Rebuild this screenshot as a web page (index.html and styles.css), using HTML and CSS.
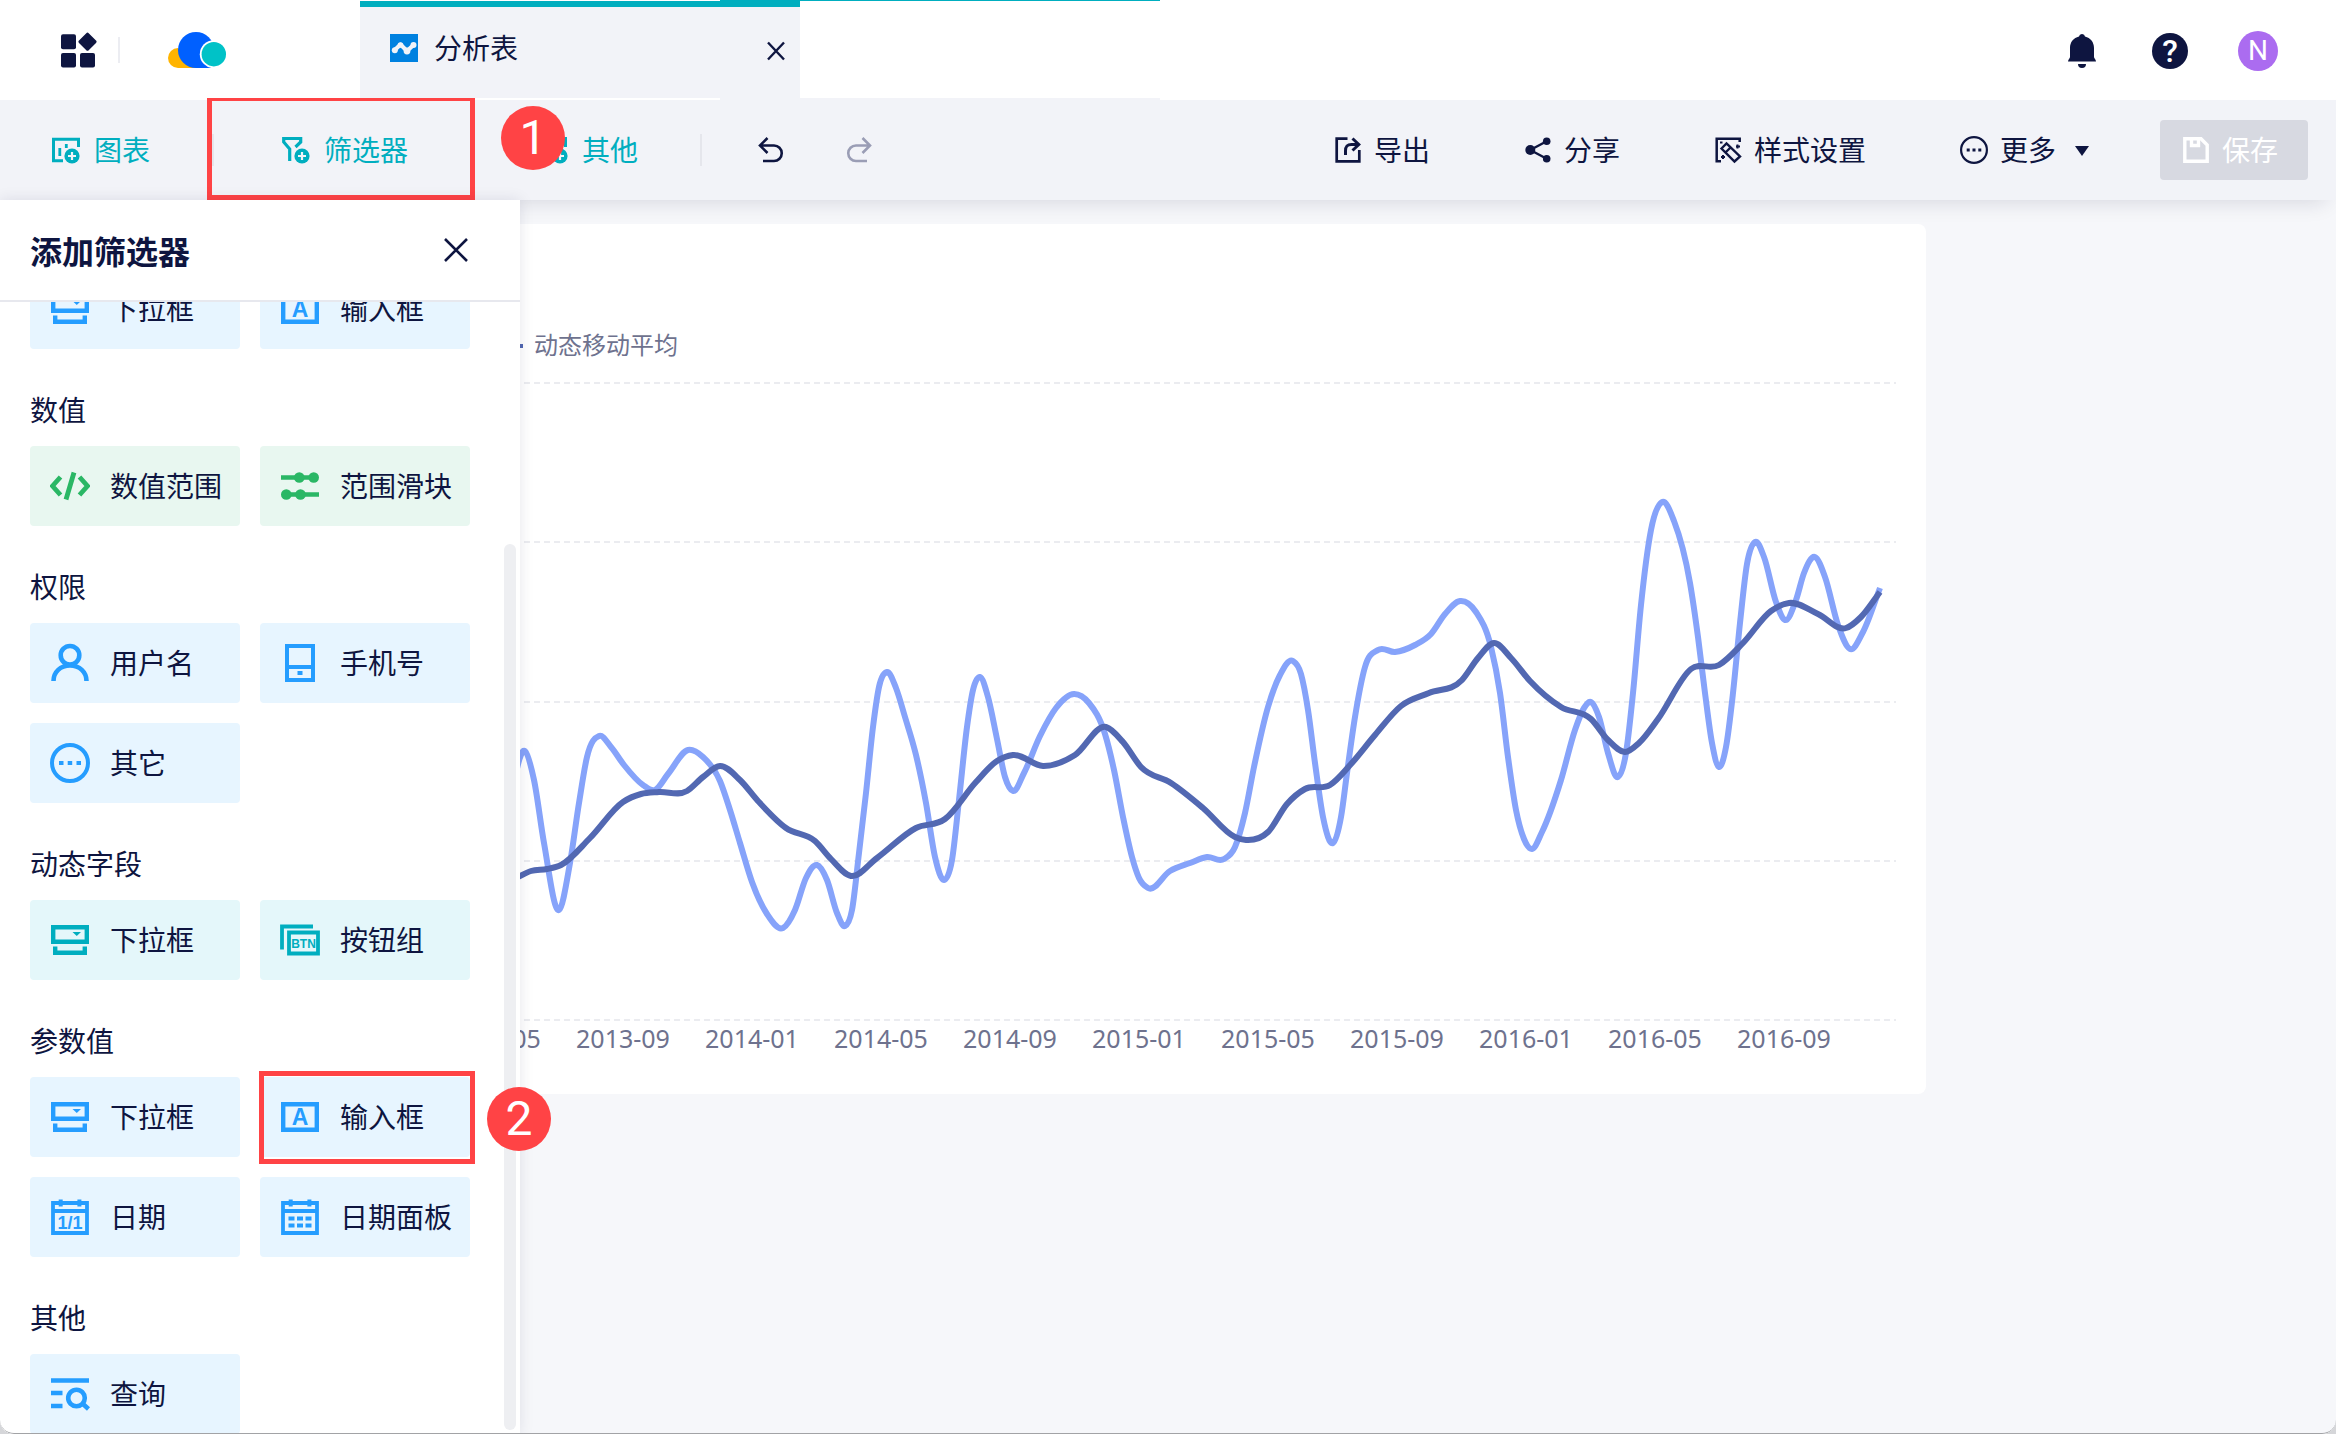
FILE: index.html
```html
<!DOCTYPE html>
<html lang="zh-CN">
<head>
<meta charset="utf-8">
<title>分析表</title>
<link rel="stylesheet" href="styles.css">
</head>
<body>
<svg class="defs" aria-hidden="true">
  <symbol id="plus" viewBox="0 0 16 16">
    <circle cx="8" cy="8" r="7.6" fill="currentColor"/>
    <path d="M8 4v8M4 8h8" stroke="#f2f3f8" stroke-width="2.2"/>
  </symbol>
  <symbol id="dropdown" viewBox="0 0 40 40">
    <path d="M3.200 7.200h33.600v14.600H3.200zM5.200 26.500v6.300h29.600v-6.300" fill="none" stroke="currentColor" stroke-width="4.400"/>
    <path d="M22.500 12h8.500l-4.250 4z" fill="currentColor"/>
  </symbol>
  <symbol id="calendar" viewBox="0 0 40 40">
    <path d="M3 6h34v30H3zM3 14h34" fill="none" stroke="currentColor" stroke-width="3.800"/>
    <path d="M10.700 2.500v7M29.400 2.500v7" stroke="currentColor" stroke-width="4"/>
  </symbol>
</svg>
<div class="app">
  <header class="topbar">
    <div class="brand">
      <button class="icon-btn" aria-label="应用">
        <svg width="36" height="36" viewBox="0 0 36 36" fill="currentColor"><rect y="2.300" width="15" height="15" rx="2"/><rect y="21" width="15" height="14.500" rx="2"/><rect x="19" y="21" width="15" height="14.500" rx="2"/><path d="M25.300 1.200q1.200-1.200 2.400 0l7.300 7.300q1.200 1.200 0 2.400l-7.300 7.300q-1.200 1.200-2.400 0L18 10.900q-1.200-1.200 0-2.400z"/></svg>
      </button>
      <span class="brand-rule"></span>
      <svg width="58" height="36" viewBox="0 0 58 36"><path d="M10 16a10 10 0 0 0 0 20h20z" fill="#ffb400"/><circle cx="28" cy="18" r="18" fill="#0060ff"/><path d="M28 30h16v6H28z" fill="#0060ff"/><circle cx="45.800" cy="22.200" r="14" fill="#fff"/><circle cx="45.800" cy="22.200" r="12.200" fill="#00c2c7"/></svg>
    </div>
    <div class="tab">
      <a class="tab-name" href="#sheet">
        <svg width="28" height="28" viewBox="0 0 28 28"><path d="M0 0h28v28H0z" fill="#0081e0"/><path d="M4.500 16.300L10.500 10.500L17 17L23.500 11" fill="none" stroke="#f2f3f8" stroke-width="4" stroke-linejoin="round"/><g fill="#f2f3f8"><circle cx="4.800" cy="16.200" r="3"/><circle cx="10.500" cy="11" r="2.800"/><circle cx="17" cy="17" r="3.400"/><circle cx="23.500" cy="11" r="3"/></g></svg>
        <span class="label">分析表</span>
      </a>
      <button class="tab-close" aria-label="关闭标签"><svg width="20" height="20" viewBox="0 0 20 20"><path d="M2 1.500l16 17M18 1.500L2 18.500" stroke="currentColor" stroke-width="2.400"/></svg></button>
    </div>
    <div class="tab-rest"></div>
    <nav class="account">
      <button class="icon-btn" aria-label="通知"><svg width="28" height="34" viewBox="0 0 28 34" fill="currentColor"><path d="M14 0a3 3 0 0 1 3 2.500C22.500 4 26 8 26 14v9c0 1.500 2 2.500 2 4.500H0C0 25.500 2 24.500 2 23v-9C2 8 5.500 4 11 2.500A3 3 0 0 1 14 0zM10 30h8a4 4 0 0 1-8 0z"/></svg></button>
      <button class="icon-btn help" aria-label="帮助">?</button>
      <button class="icon-btn avatar">N</button>
    </nav>
  </header>

  <div class="toolbar">
    <div class="tools-left">
      <button class="tool accent"><svg class="i28" viewBox="0 0 28 28"><path d="M26.500 11V3.300H1.500v21.400H11" fill="none" stroke="currentColor" stroke-width="3"/><path d="M7.800 12v8M14.300 8v4" stroke="currentColor" stroke-width="2.800"/><use href="#plus" x="12" y="12" width="16" height="16"/></svg><span class="label">图表</span></button>
      <span class="rule"></span>
      <button class="tool accent"><svg class="i28" viewBox="0 0 28 28"><path d="M7.700 25V13L1.700 6V2.500h17V6l-5.200 5" fill="none" stroke="currentColor" stroke-width="3.200"/><use href="#plus" x="12" y="12" width="16" height="16"/></svg><span class="label">筛选器</span></button>
      <span class="rule"></span>
      <button class="tool accent"><svg class="i28" viewBox="0 0 28 28"><path d="M25.500 11V2.500H2v22h9" fill="none" stroke="currentColor" stroke-width="3"/><use href="#plus" x="12" y="12" width="16" height="16"/></svg><span class="label">其他</span></button>
      <span class="rule"></span>
      <span class="history">
        <button class="tool" aria-label="撤销"><svg class="i28" viewBox="0 0 28 28" fill="none" stroke="currentColor" stroke-width="2.600"><path d="M11.500 2L4 9.500l7.500 7.500M4 9.500h14A7.750 7.750 0 0 1 18 25H7"/></svg></button>
        <button class="tool" aria-label="重做" disabled><svg class="i28" viewBox="0 0 28 28" fill="none" stroke="currentColor" stroke-width="2.600"><path d="M16.500 2L24 9.500L16.500 17M24 9.500H10A7.750 7.750 0 0 0 10 25h11"/></svg></button>
      </span>
    </div>
    <div class="tools-right">
      <button class="tool"><svg class="i28" viewBox="0 0 28 28" fill="none" stroke="currentColor" stroke-width="2.700"><path d="M13.500 2.700H2.700v22.600h22.600V14"/><path d="M11.500 19v-4c0-4.500 1.500-6.500 6-6.500h7M18.500 2.500l6.300 6l-6.300 6" stroke-width="3"/></svg><span class="label">导出</span></button>
      <button class="tool"><svg class="i28" viewBox="0 0 28 28" fill="currentColor"><path d="M22.700 5.300L6.300 14l16.400 8.700" fill="none" stroke="currentColor" stroke-width="2.400"/><circle cx="6.300" cy="14" r="5"/><circle cx="22.700" cy="5.300" r="3.800"/><circle cx="22.700" cy="22.700" r="3.800"/></svg><span class="label">分享</span></button>
      <button class="tool"><svg class="i28" viewBox="0 0 28 28" fill="none" stroke="currentColor" stroke-width="2.500"><path d="M25.700 6V2.700H2.700v22.600H7"/><path d="M7.500 12.500l5-5L26 20.500l-5.500 5zM11.500 16.500l5-5" stroke-width="2.400"/><path d="M6 6.500h2.500M22 10.500h4M23.500 8.500v4M7 21h4M9 19v4" stroke-width="2"/></svg><span class="label">样式设置</span></button>
      <button class="tool"><svg class="i28" viewBox="0 0 28 28"><circle cx="14" cy="14" r="12.900" fill="none" stroke="currentColor" stroke-width="2.200"/><path d="M6.700 12.600h3v3h-3zM12.500 12.600h3v3h-3zM18.300 12.600h3v3h-3z" fill="currentColor"/></svg><span class="label">更多</span><svg class="caret" width="16" height="12" viewBox="0 0 16 12"><path d="M1 2h14L8 12z" fill="currentColor"/></svg></button>
      <button class="save" disabled><svg class="i28" viewBox="0 0 28 28" fill="none" stroke="currentColor" stroke-width="3.400"><path d="M2.800 2.800H19l6.200 6.200v16.200H2.800z"/><path d="M9.500 3v6.500h7V3"/></svg><span class="label">保存</span></button>
    </div>
    <span class="mark mark-filter"></span>
    <span class="step step-1">1</span>
  </div>

  <main class="canvas">
    <section class="card">
      <svg class="chart" viewBox="24 224 1902 870" role="img" aria-label="动态移动平均">
        <g id="grid" class="grid"></g>
        <path d="M495 346h28" class="legend-mark"/>
        <text x="534" y="354" class="legend">动态移动平均</text>
        <g id="axis" class="axis"></g>
        <path id="value" class="line value"/>
        <path id="average" class="line average"/>
      </svg>
    </section>
  </main>

  <aside class="drawer">
    <div class="drawer-head">
      <h2>添加筛选器</h2>
      <button class="icon-btn" aria-label="关闭"><svg width="26" height="26" viewBox="0 0 26 26"><path d="M2 2l22 22M24 2L2 24" stroke="currentColor" stroke-width="2.600"/></svg></button>
    </div>
    <div class="drawer-body">
      <div class="group">
        <button class="item blue"><svg class="i40"><use href="#dropdown"/></svg><span class="label">下拉框</span></button>
        <button class="item blue"><svg class="i40" viewBox="0 0 40 40"><path d="M3.200 7.200h33.600v25.600H3.200z" fill="none" stroke="currentColor" stroke-width="4.400"/><text x="20" y="28" class="glyph-a">A</text></svg><span class="label">输入框</span></button>
      </div>
      <h3>数值</h3>
      <div class="group">
        <button class="item green"><svg class="i40" viewBox="0 0 40 40" fill="none" stroke="currentColor" stroke-width="4.800"><path d="M10.500 11L2.500 20l8 9M29.500 11l8 9l-8 9M24 6.500L16 33.500"/></svg><span class="label">数值范围</span></button>
        <button class="item green"><svg class="i40" viewBox="0 0 40 40" fill="currentColor"><path d="M1 11.500h33M6 28.500h33" stroke="currentColor" stroke-width="4.400"/><circle cx="19.300" cy="11.500" r="5.300"/><circle cx="33.700" cy="11.500" r="5.300"/><circle cx="6.300" cy="28.500" r="5.300"/><circle cx="20.500" cy="28.500" r="5.300"/></svg><span class="label">范围滑块</span></button>
      </div>
      <h3>权限</h3>
      <div class="group">
        <button class="item blue"><svg class="i40" viewBox="0 0 40 40" fill="none" stroke="currentColor" stroke-width="4.600"><circle cx="20" cy="12.300" r="9.300"/><path d="M3.500 38C3.500 29 10.500 22.500 20 22.500S36.500 29 36.500 38"/></svg><span class="label">用户名</span></button>
        <button class="item blue"><svg class="i40" viewBox="0 0 40 40" fill="none" stroke="currentColor" stroke-width="4"><path d="M7 3h26v34H7zM7 24h26"/><path d="M17.500 30h5" stroke-width="4"/></svg><span class="label">手机号</span></button>
        <button class="item blue"><svg class="i40" viewBox="0 0 40 40"><circle cx="20" cy="20" r="18" fill="none" stroke="currentColor" stroke-width="4"/><path d="M9 18h4.500v4H9zM17.700 18h4.500v4h-4.500zM26.500 18h4.500v4h-4.500z" fill="currentColor"/></svg><span class="label">其它</span></button>
      </div>
      <h3>动态字段</h3>
      <div class="group">
        <button class="item teal"><svg class="i40"><use href="#dropdown"/></svg><span class="label">下拉框</span></button>
        <button class="item teal"><svg class="i40" viewBox="0 0 40 40"><path d="M2 29.500V6.500h31M9 12.500h29v21H9z" fill="none" stroke="currentColor" stroke-width="3.800"/><text x="23.500" y="27.500" class="glyph-btn">BTN</text></svg><span class="label">按钮组</span></button>
      </div>
      <h3>参数值</h3>
      <div class="group">
        <button class="item blue"><svg class="i40"><use href="#dropdown"/></svg><span class="label">下拉框</span></button>
        <button class="item blue"><svg class="i40" viewBox="0 0 40 40"><path d="M3.200 7.200h33.600v25.600H3.200z" fill="none" stroke="currentColor" stroke-width="4.400"/><text x="20" y="28" class="glyph-a">A</text></svg><span class="label">输入框</span></button>
        <button class="item blue"><svg class="i40" viewBox="0 0 40 40"><use href="#calendar"/><text x="20" y="32" class="glyph-day">1/1</text></svg><span class="label">日期</span></button>
        <button class="item blue"><svg class="i40" viewBox="0 0 40 40"><use href="#calendar"/><path d="M8.500 21.500h23M8.500 28.500h23" stroke="currentColor" stroke-width="4" stroke-dasharray="6 2.500"/></svg><span class="label">日期面板</span></button>
      </div>
      <h3>其他</h3>
      <div class="group">
        <button class="item blue"><svg class="i40" viewBox="0 0 40 40" fill="none" stroke="currentColor" stroke-width="4.600"><path d="M1 6.500h38M1 19h11.500M1 32h11.500M33 30l5.500 5"/><circle cx="26.500" cy="24" r="8.300"/></svg><span class="label">查询</span></button>
      </div>
    </div>
    <span class="thumb"></span>
    <span class="mark mark-input"></span>
    <span class="step step-2">2</span>
  </aside>
</div>
<script src="chart.js"></script>
</body>
</html>
```
FILE: styles.css
```css
* { box-sizing: border-box; }

body {
  margin: 0;
  background: #d5d6d9;
  color: #0e1540;
  font: 28px/40px "Noto Sans CJK SC", "Noto Sans", sans-serif;
}

button {
  padding: 0;
  border: 0;
  background: none;
  color: inherit;
  font: inherit;
}

svg { display: block; flex: none; }
h2, h3 { margin: 0; }

.defs { position: absolute; width: 0; height: 0; }
.i28 { width: 28px; height: 28px; }
.i40 { width: 40px; height: 40px; }
.label { padding-bottom: 2px; white-space: nowrap; }

.app {
  position: relative;
  display: flex;
  flex-direction: column;
  min-height: 100vh;
  overflow: hidden;
  border-radius: 0 0 14px 14px;
  background: #f6f7fa;
}
/* Window edge, drawn over the drawer */
.app::after {
  content: "";
  position: absolute;
  z-index: 4;
  inset: auto 0 0;
  height: 14px;
  border-bottom: 1px solid #a2a3a6;
  border-radius: 0 0 14px 14px;
  pointer-events: none;
}

/* Top bar */
.topbar { display: flex; height: 100px; background: #fff; }

.brand {
  display: flex;
  align-items: center;
  width: 360px;
  padding-left: 61px;
}
.brand-rule { width: 2px; height: 26px; margin: 0 48px 0 21px; background: #ecedf2; }

.tab { display: flex; width: 440px; }
.tab-name {
  display: flex;
  align-items: center;
  gap: 16px;
  width: 360px;
  height: 97px;
  margin-top: 1px;
  padding: 0 0 10px 30px;
  border-top: 6px solid #00aebf;
  background: #f2f3f8;
  color: inherit;
  text-decoration: none;
}
.tab-close {
  display: flex;
  align-items: center;
  width: 80px;
  padding: 0 0 6px 46px;
  border-top: 7px solid #00aebf;
  background: #f2f3f8;
}
.tab-rest {
  width: 360px;
  border-top: 1px solid #00aebf;
  border-bottom: 2px solid #f2f3f8;
}

.account {
  display: flex;
  align-items: center;
  margin-left: auto;
  padding: 2px 58px 0 0;
}
.icon-btn { display: flex; align-items: center; justify-content: center; }
.help, .avatar { border-radius: 50%; color: #fff; font-family: Roboto, sans-serif; }
.help { width: 36px; height: 36px; margin: 0 50px 0 56px; background: #0e1540; font-size: 32px; font-weight: 500; }
.avatar { width: 40px; height: 40px; background: #ab6cf0; }

/* Toolbar */
.toolbar {
  position: relative;
  z-index: 2;
  display: flex;
  align-items: center;
  justify-content: space-between;
  height: 100px;
  padding: 0 28px 0 52px;
  background: #f2f3f8;
  box-shadow: 0 12px 20px -10px rgba(20, 24, 60, .14);
}
.tools-left, .tools-right, .tool, .history { display: flex; align-items: center; }
.tool { gap: 12px; }
.accent { gap: 14px; color: #00aebf; }
.rule { width: 2px; height: 32px; margin: 0 66px 0 62px; background: #e5e6ec; }
.tool + .rule { margin-right: 68px; }
.history { gap: 62px; margin-left: -14px; }
.tool:disabled { color: #9a9db5; }
.tools-right { gap: 94px; }
.caret { margin-left: 6px; }
.save {
  display: flex;
  align-items: center;
  gap: 12px;
  width: 148px;
  height: 60px;
  margin-left: -24px;
  padding-left: 22px;
  border-radius: 4px;
  background: #d7d9e1;
  color: #fff;
}

/* Chart */
.canvas { padding: 24px 410px 0 24px; }
.card { border-radius: 8px; background: #fff; }
.chart { width: 100%; height: auto; }
.grid { stroke: #ebecf0; stroke-width: 2; stroke-dasharray: 6 4; }
.line { fill: none; stroke-width: 6; stroke-linejoin: round; }
.value { stroke: #86a3fa; }
.average { stroke: #5268b2; }
.legend-mark { stroke: #5268b2; stroke-width: 4; }
.legend, .axis { fill: #6e728e; }
.legend { font-size: 24px; }
.axis { font-family: "Noto Sans", sans-serif; font-size: 25px; text-anchor: middle; }

/* Filter drawer */
.drawer {
  position: absolute;
  z-index: 3;
  top: 200px;
  bottom: 0;
  left: 0;
  display: flex;
  flex-direction: column;
  width: 520px;
  background: #fff;
  box-shadow: 0 0 14px rgba(20, 24, 60, .1);
}
.drawer-head {
  display: flex;
  flex: none;
  align-items: center;
  justify-content: space-between;
  height: 102px;
  padding: 0 51px 0 30px;
  border-bottom: 2px solid #e7e8ee;
}
.drawer-head h2 { font-size: 32px; font-weight: 700; }
.drawer-body {
  display: flex;
  flex: 1;
  flex-direction: column;
  justify-content: flex-end;
  min-height: 0;
  overflow: hidden;
  padding: 0 50px 0 30px;
}
.drawer-body h3 {
  flex: none;
  margin: 41px 0 18px;
  font-size: 28px;
  font-weight: 400;
  line-height: 38px;
}
.group { display: grid; flex: none; grid-template-columns: 1fr 1fr; gap: 20px; }
.item {
  display: flex;
  align-items: center;
  gap: 20px;
  height: 80px;
  padding-left: 20px;
  border-radius: 4px;
}
.item .label { color: #0e1540; }
.blue { background: #e7f5ff; color: #259dff; }
.green { background: #e8f7f0; color: #2ab765; }
.teal { background: #e4f7fa; color: #00aebf; }

.glyph-a, .glyph-btn, .glyph-day {
  fill: currentColor;
  font-family: "Liberation Sans", sans-serif;
  font-weight: 700;
  text-anchor: middle;
}
.glyph-a { font-size: 23px; }
.glyph-btn { font-size: 12px; }
.glyph-day { font-size: 18px; }

.thumb {
  position: absolute;
  right: 4px;
  top: 344px;
  bottom: 4px;
  width: 12px;
  border-radius: 6px;
  background: #eeeff2;
}

/* Step annotations */
.mark { position: absolute; border: 5px solid #ff4345; }
.mark-filter { left: 207px; top: -2px; width: 268px; height: 102px; border-top-width: 3px; }
.mark-input { left: 259px; bottom: 270px; width: 216px; height: 93px; }
.step {
  position: absolute;
  width: 64px;
  height: 64px;
  border-radius: 50%;
  background: #ff4345;
  color: #fff;
  font: 48px/64px Roboto, sans-serif;
  text-align: center;
}
.step-1 { left: 501px; top: 6px; }
.step-2 { left: 487px; bottom: 283px; }
```
FILE: chart.js
```javascript
const SVG = "http://www.w3.org/2000/svg";

const value = [
  [494, 880], [510, 800], [525, 751], [534, 780], [544, 843], [559, 910], [570, 863], [579, 803], [587, 757],
  [599, 736], [611, 747], [624, 765], [643, 785], [655, 790], [668, 774], [688, 750], [703, 757], [720, 781],
  [730, 810], [740, 843], [752, 882], [767, 914], [783, 928], [795, 910], [806, 878], [817, 865], [827, 880],
  [837, 913], [845, 926], [852, 910], [859, 853], [866, 793], [873, 727], [879, 687], [887, 672], [896, 688],
  [905, 717], [916, 755], [926, 803], [935, 857], [944, 880], [952, 860], [959, 800], [967, 727], [973, 690],
  [980, 677], [988, 697], [997, 739], [1005, 777], [1013, 791], [1024, 773], [1040, 736], [1056, 708],
  [1074, 694], [1089, 703], [1105, 734], [1114, 770], [1123, 817], [1132, 857], [1139, 878], [1148, 888],
  [1170, 871], [1190, 863], [1207, 857], [1224, 859], [1235, 847], [1245, 813], [1254, 767], [1268, 707],
  [1280, 675], [1293, 661], [1301, 674], [1308, 710], [1315, 763], [1323, 817], [1333, 843], [1341, 817],
  [1347, 773], [1355, 717], [1365, 667], [1378, 650], [1395, 652], [1415, 645], [1431, 634], [1445, 614],
  [1460, 601], [1476, 612], [1491, 647], [1500, 693], [1508, 757], [1516, 810], [1524, 839], [1532, 849],
  [1542, 832], [1561, 780], [1575, 730], [1584, 708], [1591, 702], [1599, 717], [1608, 753], [1618, 777],
  [1626, 753], [1633, 693], [1641, 605], [1651, 530], [1662, 502], [1674, 521], [1690, 583], [1698, 637],
  [1705, 693], [1712, 743], [1719, 767], [1726, 747], [1733, 693], [1740, 623], [1747, 564], [1755, 542],
  [1764, 557], [1776, 602], [1785, 620], [1796, 600], [1804, 573], [1815, 557], [1825, 577], [1838, 625],
  [1850, 649], [1863, 632], [1880, 588]
];

const average = [
  [494, 890], [518, 877], [531, 871], [547, 869], [561, 865], [590, 838], [623, 802], [641, 794], [659, 792],
  [687, 791], [703, 777], [720, 766], [740, 780], [758, 801], [786, 828], [815, 841], [831, 859], [851, 876],
  [877, 858], [916, 828], [945, 819], [976, 782], [997, 761], [1013, 755], [1043, 766], [1075, 755],
  [1106, 727], [1123, 742], [1141, 767], [1171, 783], [1203, 808], [1235, 837], [1246, 840], [1268, 832],
  [1287, 804], [1305, 789], [1330, 785], [1351, 764], [1375, 735], [1401, 706], [1429, 693], [1462, 680],
  [1478, 658], [1494, 643], [1511, 658], [1530, 681], [1561, 707], [1591, 719], [1608, 740], [1625, 752],
  [1639, 743], [1658, 719], [1691, 669], [1719, 665], [1743, 643], [1771, 611], [1789, 603], [1818, 614],
  [1846, 628], [1861, 617], [1880, 592]
];

// Smooth cubic through every point; each tangent is weighted by the spacing of its neighbours
function curve(points) {
  const slope = (a, b) => (b[1] - a[1]) / (b[0] - a[0]);
  const tangents = points.map((p, i) => {
    if (i === 0) return slope(p, points[1]);
    if (i === points.length - 1) return slope(points[i - 1], p);
    const a = points[i - 1];
    const b = points[i + 1];
    return (slope(a, p) * (b[0] - p[0]) + slope(p, b) * (p[0] - a[0])) / (b[0] - a[0]);
  });
  let d = `M${points[0]}`;
  for (let i = 1; i < points.length; i++) {
    const [x0, y0] = points[i - 1];
    const [x1, y1] = points[i];
    const step = (x1 - x0) / 3;
    d += `C${x0 + step},${y0 + step * tangents[i - 1]} ${x1 - step},${y1 - step * tangents[i]} ${x1},${y1}`;
  }
  return d;
}

document.getElementById("value").setAttribute("d", curve(value));
document.getElementById("average").setAttribute("d", curve(average));

for (const y of [383, 542, 702, 861, 1020]) {
  const line = document.createElementNS(SVG, "path");
  line.setAttribute("d", `M54 ${y}H1896`);
  document.getElementById("grid").append(line);
}

["2013-05", "2013-09", "2014-01", "2014-05", "2014-09", "2015-01", "2015-05", "2015-09", "2016-01", "2016-05", "2016-09"]
  .forEach((label, i) => {
    const text = document.createElementNS(SVG, "text");
    text.setAttribute("x", 494 + i * 129);
    text.setAttribute("y", 1048);
    text.textContent = label;
    document.getElementById("axis").append(text);
  });
```
